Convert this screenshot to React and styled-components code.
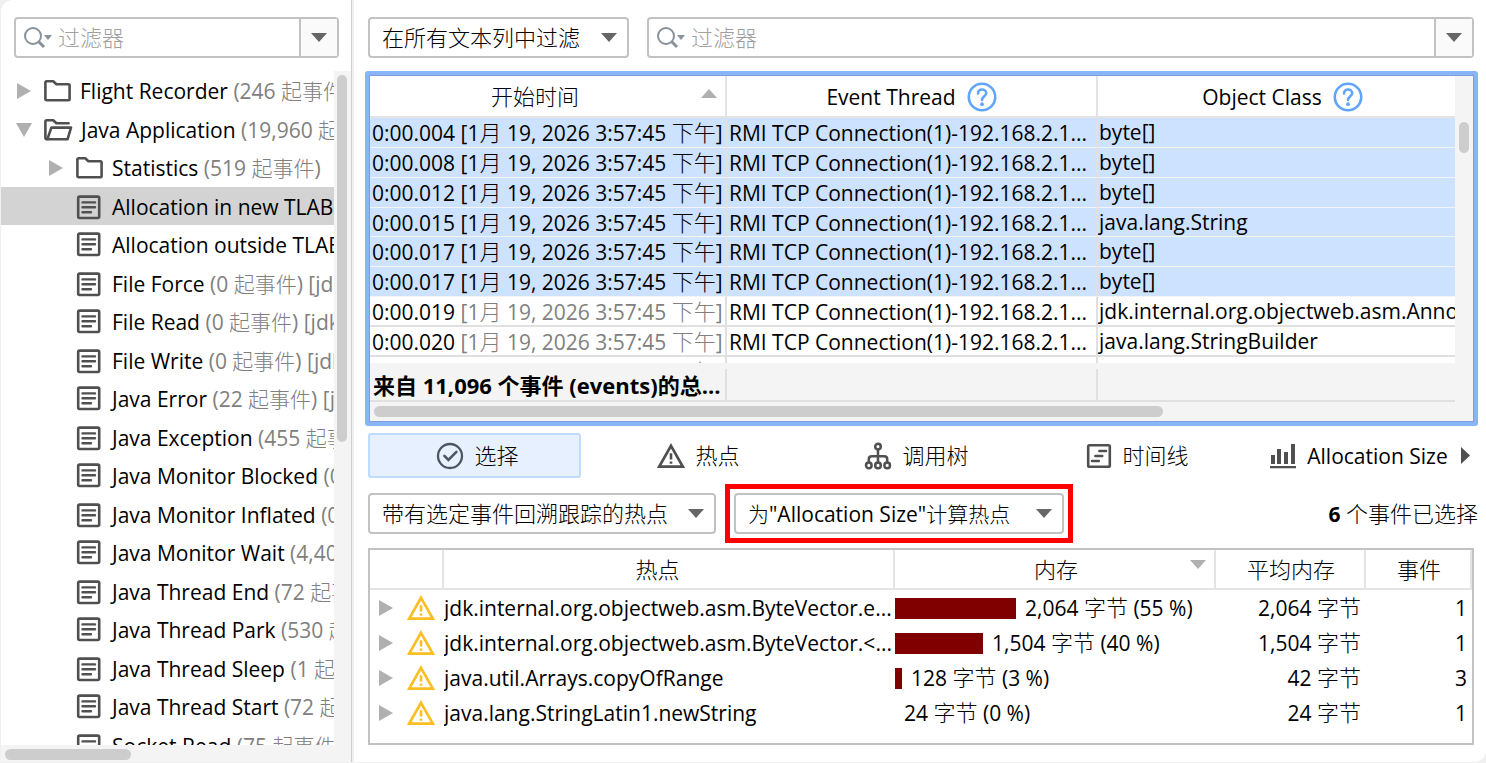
import React from "react";
import styled, { createGlobalStyle } from "styled-components";

const Global = createGlobalStyle`
  *, *::before, *::after { box-sizing: border-box; }
  body {
    margin: 0;
    background: #f0f0f0;
    color: #000;
    font-family: "Open Sans", "Noto Sans CJK SC Light", "Noto Sans CJK SC", sans-serif;
    font-size: 21px;
    line-height: 30px;
  }
  button, input, select { font: inherit; color: inherit; margin: 0; padding: 0; }
  button { background: none; border: 0; }
  ul { list-style: none; margin: 0; padding: 0; }
`;

const LINE = "#c2c2c2";
const RULE = "#e4e4e4";

/* ---------- text ---------- */
const Han = styled.span`
  font-size: 22px;
  line-height: 22px;
  font-weight: 300;
`;
const HAN_RUN = /([\u4e00-\u9fff]+)/;
const Mixed = ({ children }) =>
  children.split(HAN_RUN).map((part, i) => (i % 2 ? <Han key={i}>{part}</Han> : part));

/* ---------- page ---------- */
const Page = styled.div`
  display: flex;
  gap: 2px;
  height: 100vh;
  padding: 0 0 1px 1px;
`;
const Sidebar = styled.aside`
  display: flex;
  flex-direction: column;
  flex: 0 0 351px;
  min-width: 0;
  padding-top: 17px;
  background: #fff;
  border-right: 1px solid #cfcfcf;
  border-top-left-radius: 12px;
`;
const Main = styled.main`
  display: flex;
  flex-direction: column;
  flex: 1;
  min-width: 0;
  padding: 17px 8px 17px 11px;
  background: #fff;
  border-bottom-right-radius: 12px;
`;

/* ---------- form parts ---------- */
const SearchBox = styled.div`
  display: flex;
  align-items: center;
  flex: ${(p) => (p.$grow ? 1 : "none")};
  height: 41px;
  margin: ${(p) => p.$margin || 0};
  padding-left: 8px;
  border: 2px solid ${LINE};
  border-radius: 4px;
  background: #fff;
`;
const SearchInput = styled.input`
  flex: 1;
  min-width: 0;
  height: 37px;
  padding: 0 0 2px 5px;
  border: 0;
  outline: 0;
  background: transparent;
  font-size: 22px;
  &::placeholder { color: #a0a0a0; opacity: 1; font-weight: 300; }
`;
const DropButton = styled.button`
  display: grid;
  place-items: center;
  flex: 0 0 38px;
  height: 37px;
  border-left: 2px solid ${LINE};
  background: #fafafa;
`;
const SelectWrap = styled.label`
  display: grid;
  grid-template-columns: 1fr 16px;
  align-items: center;
  width: ${(p) => p.$width}px;
  height: 41px;
  padding-right: 10px;
  border: 2px solid ${LINE};
  border-radius: 4px;
  background: #fff;
  svg { grid-area: 1 / 2; pointer-events: none; }
`;
const Select = styled.select`
  grid-area: 1 / 1 / 2 / 3;
  width: 100%;
  height: 37px;
  padding: 0 0 ${(p) => (p.$mixed ? 0 : 2)}px 12px;
  border: 0;
  outline: 0;
  background: transparent;
  appearance: none;
  font-size: ${(p) => (p.$mixed ? 21 : 22)}px;
  font-weight: ${(p) => (p.$mixed ? 400 : 300)};
`;
const Bar = styled.div`
  display: flex;
  align-items: center;
  gap: ${(p) => p.$gap || 0}px;
  padding: 0 4px 0 3px;
`;
const Highlight = styled.div`
  padding: 4px;
  border: 5px solid #f00;
`;
const SelectedCount = styled.p`
  flex: 1;
  margin: 0 -4px 0 0;
  text-align: right;
  white-space: nowrap;
`;

/* ---------- sidebar tree ---------- */
const TreeArea = styled.div`
  display: grid;
  grid-template-columns: 1fr 17px;
  grid-template-rows: 1fr 17px;
  flex: 1;
  min-height: 0;
  margin-top: 13px;
  background: #f4f4f4;
`;
const Tree = styled.ul`
  overflow: hidden;
  background: #fff;
`;
const TreeRow = styled.li`
  display: flex;
  align-items: center;
  height: 39px;
  padding-left: ${(p) => (p.$level ? 46 : 14)}px;
  white-space: pre;
  background: ${(p) => (p.$selected ? "#d3d3d3" : "transparent")};
  &:nth-child(even) { height: 38px; padding-top: 2px; }
`;
const Toggle = styled.span`
  display: grid;
  place-items: center;
  flex: 0 0 18px;
  margin-right: 11px;
`;
const TreeIcon = styled.span`
  display: grid;
  flex: 0 0 28px;
  margin-right: 8px;
`;
const Muted = styled.span`
  color: #808080;
`;
const TrackV = styled.div`
  padding: ${(p) => p.$top}px 0 0 ${(p) => p.$left}px;
`;
const TrackH = styled.div`
  padding: 4px 0 0 4px;
`;
const Thumb = styled.div`
  width: ${(p) => p.$w};
  height: ${(p) => p.$h};
  border-radius: 6px;
  background: #cdcdcd;
`;

/* ---------- events table ---------- */
const EventsFrame = styled.section`
  display: grid;
  grid-template-columns: 1fr 18px;
  grid-template-rows: 287px 39px 19px;
  margin-top: 13px;
  border: 4px solid #8ab4f8;
  outline: 1px solid #7c9fdc;
  outline-offset: -5px;
  border-radius: 3px;
  padding: 1px;
  background: #f4f4f4;
`;
const Clip = styled.div`
  overflow: hidden;
  background: ${(p) => (p.$plain ? "transparent" : "#fff")};
`;
const Grid = styled.table`
  width: 100%;
  table-layout: fixed;
  border-collapse: separate;
  border-spacing: 0;
  white-space: pre;
  th, td { padding: 0; overflow: hidden; }
`;
const Th = styled.th`
  height: ${(p) => p.$h || 42}px;
  border-right: 2px solid ${RULE};
  border-bottom: 2px solid ${RULE};
  font-weight: ${(p) => (p.$latin ? 400 : 300)};
  font-size: ${(p) => (p.$latin ? 21 : 22)}px;
  &:last-child { border-right-width: ${(p) => (p.$h ? 2 : 0)}px; }
`;
const HeadInner = styled.div`
  display: flex;
  align-items: center;
  justify-content: center;
  gap: 11px;
  padding: ${(p) => p.$pad || 0};
  svg { flex: none; }
`;
const HeadLabel = styled.span`
  flex: 1;
  text-align: center;
`;
const SortMark = styled.span`
  display: grid;
  padding-bottom: ${(p) => p.$lift}px;
`;
const HelpButton = styled.button`
  display: grid;
`;
const EventRow = styled.tr`
  height: 30px;
  &:nth-child(4) { height: 29px; }
  td {
    border-bottom: ${(p) => (p.$on ? "1px solid #f4f4f4" : "2px solid #e0e0e0")};
    border-right: 2px solid #e0e0e0;
    background: ${(p) => (p.$on ? "#cde2fe" : "#fff")};
    padding: 2px 0 0 2px;
    line-height: 25px;
  }
  td:last-child { border-right: 0; padding: 0 0 0 1px; line-height: 27px; }
`;
const TotalBand = styled(Clip)`
  padding-top: 6px;
`;
const TotalRow = styled.tr`
  td {
    height: 33px;
    border-right: 2px solid #e0e0e0;
    border-bottom: 2px solid #e0e0e0;
    padding-left: 3px;
    font-family: "Open Sans", "Noto Sans CJK SC", sans-serif;
    font-size: 22px;
    font-weight: 700;
    line-height: 30px;
  }
  td:last-child { border-right: 0; }
`;

/* ---------- tabs ---------- */
const TabStrip = styled.nav`
  display: flex;
  align-items: center;
  flex: 1;
  margin: 7px 0 6px;
`;
const Tabs = styled.div`
  display: grid;
  grid-template-columns: repeat(5, 1fr);
  gap: 8px;
  flex: 1;
`;
const Tab = styled.button`
  display: flex;
  align-items: center;
  justify-content: center;
  gap: 10px;
  height: 45px;
  border: 2px solid ${(p) => (p.$on ? "#bfdbfe" : "transparent")};
  border-radius: 3px;
  background: ${(p) => (p.$on ? "#e6f0fe" : "transparent")};
  white-space: nowrap;
  font-size: ${(p) => (p.$latin ? 21 : 22)}px;
  font-weight: ${(p) => (p.$latin ? 400 : 300)};
  &:nth-child(-n + 2) { padding-left: 6px; }
`;
const TabLabel = styled.span`
  padding-bottom: 2px;
`;
const MoreButton = styled.button`
  display: grid;
  width: 13px;
  margin-left: -4px;
`;

/* ---------- hot spots table ---------- */
const HotFrame = styled.section`
  flex: 1;
  min-height: 0;
  margin: 5px 4px 0 3px;
  border: 2px solid ${LINE};
`;
const HotRow = styled.tr`
  td { height: 35px; padding-top: 1px; }
  td:nth-child(4) { padding-right: 5px; text-align: right; }
  td:nth-child(5) { padding-right: 5px; text-align: right; }
`;
const RowIcons = styled.div`
  display: flex;
  align-items: center;
  gap: 14px;
  padding-left: 9px;
`;
const Meter = styled.div`
  display: flex;
  align-items: center;
  gap: 9px;
`;
const MeterBar = styled.span`
  height: 21px;
  background: #800000;
`;

/* ---------- icons ---------- */
const Caret = ({ color = "#666", dir = "down", w = 16, h = 9 }) => {
  const pts = {
    down: `0,0 ${w},0 ${w / 2},${h}`,
    up: `0,${h} ${w},${h} ${w / 2},0`,
    right: `0,0 ${w},${h / 2} 0,${h}`,
  };
  return (
    <svg width={w} height={h} aria-hidden="true">
      <polygon points={pts[dir]} fill={color} />
    </svg>
  );
};
const SearchIcon = () => (
  <svg width="29" height="24" viewBox="0 0 29 24" aria-hidden="true">
    <circle cx="9" cy="10" r="8" fill="none" stroke="#87929b" strokeWidth="2" />
    <path d="M14.5 15.5L20 21" stroke="#87929b" strokeWidth="3" />
    <polygon points="20,9 28,9 24,14" fill="#87929b" />
  </svg>
);
const FolderIcon = () => (
  <svg width="28" height="22" viewBox="0 0 28 22" fill="none" stroke="#505050" strokeWidth="2.6" strokeLinejoin="round">
    <path d="M1.4 2.5Q1.4 1.3 2.6 1.3H9.2L12.4 4.3H24.4Q25.6 4.3 25.6 5.5V19Q25.6 20.2 24.4 20.2H2.6Q1.4 20.2 1.4 19Z" />
  </svg>
);
const OpenFolderIcon = () => (
  <svg width="29" height="22" viewBox="0 0 29 22" fill="none" stroke="#505050" strokeWidth="2.6" strokeLinejoin="round" strokeLinecap="round">
    <path d="M2.6 20.2Q1.4 20.2 1.4 19V2.5Q1.4 1.3 2.6 1.3H9.2L12.4 4.3H24.6" />
    <path d="M3.4 20.2L7.4 8.6H27L23.6 20.2Z" />
  </svg>
);
const PageIcon = () => (
  <svg width="25" height="25" viewBox="0 0 25 25" fill="none" stroke="#505050" strokeWidth="2.6">
    <rect x="2.2" y="1.6" width="21" height="21.4" rx="1.4" />
    <path d="M6.5 7.4H19M6.5 12.2H19M6.5 17.2H15" strokeLinecap="round" strokeWidth="2.4" />
  </svg>
);
const HelpIcon = () => (
  <svg width="30" height="30" viewBox="0 0 30 30" fill="none" stroke="#60a5fa" strokeWidth="2.6">
    <circle cx="15" cy="15" r="13.2" />
    <path d="M11 11.4C11 6.2 19.2 6.4 19.2 11.2C19.2 14.2 15 14.4 15 18" strokeLinecap="round" />
    <circle cx="15" cy="22.2" r="1.9" fill="#60a5fa" stroke="none" />
  </svg>
);
const CheckIcon = () => (
  <svg width="28" height="28" viewBox="0 0 28 28" fill="none" stroke="#4b5563" strokeWidth="2.3">
    <circle cx="14" cy="14" r="12" />
    <path d="M8.4 13.8L12.4 17.8L20.4 9.8" strokeWidth="2.6" strokeLinecap="round" />
  </svg>
);
const WarnIcon = ({ color = "#505050" }) => (
  <svg width="28" height="26" viewBox="0 0 28 26" fill="none" stroke={color} strokeWidth="2.7">
    <path d="M14 2.8L25.8 23.7H2.2Z" />
    <path d="M14 10.2V16.6M14 18.4V20.8" strokeWidth="2.6" />
  </svg>
);
const CallTreeIcon = () => (
  <svg width="28" height="28" viewBox="0 0 28 28" fill="none" stroke="#505050" strokeWidth="2.5">
    <circle cx="14" cy="4.6" r="2.8" />
    <circle cx="4.8" cy="23.4" r="2.8" />
    <circle cx="14" cy="23.4" r="2.8" />
    <circle cx="23.2" cy="23.4" r="2.8" />
    <path d="M14 7.6V20.5M4.8 20.5V17Q4.8 14.2 7.8 14.2H20.2Q23.2 14.2 23.2 17V20.5" />
  </svg>
);
const TimelineIcon = () => (
  <svg width="26" height="26" viewBox="0 0 26 26" fill="none" stroke="#505050" strokeWidth="2.6">
    <rect x="2.2" y="2.2" width="21.6" height="21.6" rx="1.4" />
    <path d="M13.4 8H20M9.4 13H16.2M6 18H12.8" strokeLinecap="round" />
  </svg>
);
const ChartIcon = () => (
  <svg width="28" height="26" viewBox="0 0 28 26" fill="#505050">
    <path d="M2 12H6V21H2ZM8 6H12V21H8ZM15 9H19V21H15ZM22 1H26V21H22ZM1 23H27V25.2H1Z" />
  </svg>
);

/* ---------- data ---------- */
const treeItems = [
  { icon: "folder", toggle: "right", name: "Flight Recorder", note: "(246 起事件)" },
  { icon: "open", toggle: "down", name: "Java Application", note: "(19,960 起事件)" },
  { icon: "folder", toggle: "right", level: 1, name: "Statistics", note: "(519 起事件)" },
  { level: 1, selected: true, name: "Allocation in new TLAB", note: "(11,096 起事件)" },
  { level: 1, name: "Allocation outside TLAB", note: "(0 起事件)" },
  { level: 1, name: "File Force", note: "(0 起事件) [jdk.FileForce]" },
  { level: 1, name: "File Read", note: "(0 起事件) [jdk.FileRead]" },
  { level: 1, name: "File Write", note: "(0 起事件) [jdk.FileWrite]" },
  { level: 1, name: "Java Error", note: "(22 起事件) [jdk.JavaErrorThrow]" },
  { level: 1, name: "Java Exception", note: "(455 起事件)" },
  { level: 1, name: "Java Monitor Blocked", note: "(0 起事件)" },
  { level: 1, name: "Java Monitor Inflated", note: "(0 起事件)" },
  { level: 1, name: "Java Monitor Wait", note: "(4,400 起事件)" },
  { level: 1, name: "Java Thread End", note: "(72 起事件)" },
  { level: 1, name: "Java Thread Park", note: "(530 起事件)" },
  { level: 1, name: "Java Thread Sleep", note: "(1 起事件)" },
  { level: 1, name: "Java Thread Start", note: "(72 起事件)" },
  { level: 1, name: "Socket Read", note: "(75 起事件)" },
];
const icons = { folder: <FolderIcon />, open: <OpenFolderIcon />, page: <PageIcon /> };

const STAMP = "[1月 19, 2026 3:57:45 下午]";
const events = [
  ["0:00.004", "byte[]", true],
  ["0:00.008", "byte[]", true],
  ["0:00.012", "byte[]", true],
  ["0:00.015", "java.lang.String", true],
  ["0:00.017", "byte[]", true],
  ["0:00.017", "byte[]", true],
  ["0:00.019", "jdk.internal.org.objectweb.asm.Anno...", false],
  ["0:00.020", "java.lang.StringBuilder", false],
  ["0:00.020", "java.lang.String", false],
];
const hotSpots = [
  ["jdk.internal.org.objectweb.asm.ByteVector.e...", 55, "2,064 字节 (55 %)", "2,064 字节", 1],
  ["jdk.internal.org.objectweb.asm.ByteVector.<...", 40, "1,504 字节 (40 %)", "1,504 字节", 1],
  ["java.util.Arrays.copyOfRange", 3, "128 字节 (3 %)", "42 字节", 3],
  ["java.lang.StringLatin1.newString", 0, "24 字节 (0 %)", "24 字节", 1],
];

const Search = ({ label, ...rest }) => (
  <SearchBox {...rest}>
    <SearchIcon />
    <SearchInput type="text" placeholder="过滤器" aria-label={label} />
    <DropButton aria-label="历史记录"><Caret /></DropButton>
  </SearchBox>
);

const Combo = ({ width, text, label, mixed }) => (
  <SelectWrap $width={width}>
    <Select aria-label={label} $mixed={mixed}>
      <option>{text}</option>
    </Select>
    <Caret />
  </SelectWrap>
);

const EventCols = () => (
  <colgroup>
    <col width="32.9%" />
    <col width="34.2%" />
    <col width="32.9%" />
  </colgroup>
);

export default function App() {
  return (
    <>
      <Global />
      <Page>
        <Sidebar>
          <Search label="过滤事件类型" $margin="0 12px 0 13px" />
          <TreeArea>
            <Tree>
              {treeItems.map((t) => (
                <TreeRow key={t.name} $level={t.level} $selected={t.selected}>
                  <Toggle>
                    {t.toggle === "right" && <Caret dir="right" w={14} h={16} color="#b0b0b0" />}
                    {t.toggle === "down" && <Caret w={16} h={14} color="#b0b0b0" />}
                  </Toggle>
                  <TreeIcon>{icons[t.icon || "page"]}</TreeIcon>
                  <span>{t.name} <Muted>{t.note}</Muted></span>
                </TreeRow>
              ))}
            </Tree>
            <TrackV $top={4} $left={3}><Thumb $w="10px" $h="367px" /></TrackV>
            <TrackH><Thumb $w="126px" $h="11px" /></TrackH>
          </TreeArea>
        </Sidebar>

        <Main>
          <Bar $gap={18}>
            <Combo width={261} text="在所有文本列中过滤" label="过滤列" />
            <Search label="过滤事件" $grow />
          </Bar>

          <EventsFrame>
            <Clip>
              <Grid>
                <EventCols />
                <thead>
                  <tr>
                    <Th>
                      <HeadInner $pad="0 8px 0 10px">
                        <HeadLabel>开始时间</HeadLabel>
                        <SortMark $lift={6}><Caret dir="up" color="#b0b0b0" /></SortMark>
                      </HeadInner>
                    </Th>
                    <Th $latin>
                      <HeadInner $pad="2px 0 0 0">
                        Event Thread
                        <HelpButton aria-label="Event Thread"><HelpIcon /></HelpButton>
                      </HeadInner>
                    </Th>
                    <Th $latin>
                      <HeadInner $pad="2px 0 0 12px">
                        Object Class
                        <HelpButton aria-label="Object Class"><HelpIcon /></HelpButton>
                      </HeadInner>
                    </Th>
                  </tr>
                </thead>
                <tbody>
                  {events.map(([time, cls, on], i) => (
                    <EventRow key={i} $on={on}>
                      <td>
                        {time} {on ? <Mixed>{STAMP}</Mixed> : <Muted><Mixed>{STAMP}</Mixed></Muted>}
                      </td>
                      <td>RMI TCP Connection(1)-192.168.2.1...</td>
                      <td>{cls}</td>
                    </EventRow>
                  ))}
                </tbody>
              </Grid>
            </Clip>
            <TrackV $top={46} $left={4}><Thumb $w="10px" $h="31px" /></TrackV>
            <TotalBand $plain>
              <Grid>
                <EventCols />
                <tbody>
                  <TotalRow>
                    <td>来自 11,096 个事件 (events)的总...</td>
                    <td />
                    <td />
                  </TotalRow>
                </tbody>
              </Grid>
            </TotalBand>
            <span />
            <TrackH><Thumb $w="73%" $h="11px" /></TrackH>
          </EventsFrame>

          <Bar>
            <TabStrip>
              <Tabs>
                <Tab $on><CheckIcon /><TabLabel>选择</TabLabel></Tab>
                <Tab><WarnIcon /><TabLabel>热点</TabLabel></Tab>
                <Tab><CallTreeIcon /><TabLabel>调用树</TabLabel></Tab>
                <Tab><TimelineIcon /><TabLabel>时间线</TabLabel></Tab>
                <Tab $latin><ChartIcon />Allocation Size</Tab>
              </Tabs>
              <MoreButton aria-label="更多"><Caret dir="right" w={9} h={17} color="#505050" /></MoreButton>
            </TabStrip>
          </Bar>

          <Bar $gap={9}>
            <Combo width={348} text="带有选定事件回溯跟踪的热点" label="热点范围" />
            <Highlight>
              <Combo width={330} text={'为"Allocation Size"计算热点'} label="计算方式" mixed />
            </Highlight>
            <SelectedCount><b>6</b><Mixed> 个事件已选择</Mixed></SelectedCount>
          </Bar>

          <HotFrame>
            <Grid>
              <colgroup>
                <col width="74" />
                <col />
                <col width="321" />
                <col width="150" />
                <col width="106" />
              </colgroup>
              <thead>
                <tr>
                  <Th $h={40} />
                  <Th $h={40}><HeadInner $pad="0 22px 0 0">热点</HeadInner></Th>
                  <Th $h={40}>
                    <HeadInner $pad="0 8px 0 38px">
                      <HeadLabel>内存</HeadLabel>
                      <SortMark $lift={10}><Caret color="#b0b0b0" /></SortMark>
                    </HeadInner>
                  </Th>
                  <Th $h={40}><HeadInner $pad="0 0 0 2px">平均内存</HeadInner></Th>
                  <Th $h={40}><HeadInner $pad="0 0 0 2px">事件</HeadInner></Th>
                </tr>
              </thead>
              <tbody>
                {hotSpots.map(([name, pct, mem, avg, n]) => (
                  <HotRow key={name}>
                    <td>
                      <RowIcons>
                        <Caret dir="right" w={14} h={16} color="#b0b0b0" />
                        <WarnIcon color="#fbbf24" />
                      </RowIcons>
                    </td>
                    <td>{name}</td>
                    <td>
                      <Meter>
                        <MeterBar style={{ width: Math.round(pct * 2.2) }} />
                        <span><Mixed>{mem}</Mixed></span>
                      </Meter>
                    </td>
                    <td><Mixed>{avg}</Mixed></td>
                    <td>{n}</td>
                  </HotRow>
                ))}
              </tbody>
            </Grid>
          </HotFrame>
        </Main>
      </Page>
    </>
  );
}
